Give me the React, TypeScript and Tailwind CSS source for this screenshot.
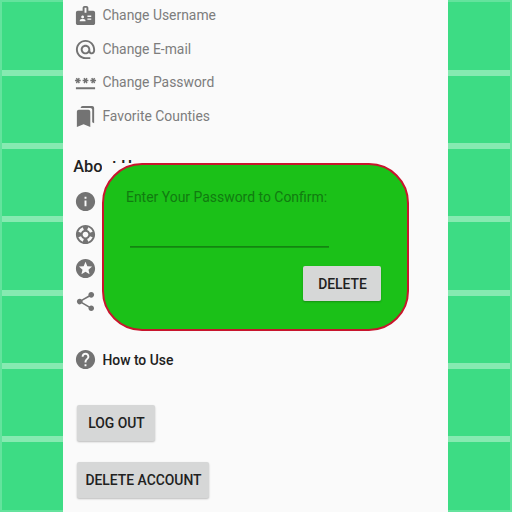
import type { ReactNode } from "react";
import {
  MdBadge,
  MdAlternateEmail,
  MdPassword,
  MdBookmarks,
  MdInfo,
  MdSupport,
  MdStars,
  MdShare,
  MdHelp,
} from "react-icons/md";

function Cells({ className }: { className: string }) {
  return (
    <div className={`grid h-full grid-rows-7 bg-[#3ddc84] ${className}`}>
      {[0, 1, 2, 3, 4, 5, 6].map((i) => (
        <div
          key={i}
          className="border-b-[3px] border-t-[3px] border-[#86eab1] first:border-t-2 first:border-t-[#64e39d] last:border-b-2 last:border-b-[#64e39d]"
        />
      ))}
    </div>
  );
}

function Row({ icon, children }: { icon: ReactNode; children?: ReactNode }) {
  return (
    <li className="flex h-[33.5px] items-center text-[13.9px] text-[#7d7d7d]">
      <span className="mr-[5.4px] text-[23px] text-[#737373]">{icon}</span>
      {children}
    </li>
  );
}

function Button({ className, children }: { className: string; children: ReactNode }) {
  return (
    <button
      className={`flex items-center justify-center whitespace-nowrap rounded-[2px] bg-[#d6d7d7] pl-px text-[13.9px] font-medium text-[#212121] shadow-[0_1px_2px_rgba(0,0,0,0.25)] ${className}`}
    >
      {children}
    </button>
  );
}

export default function App() {
  return (
    <div className="relative flex h-[512px] w-[512px] overflow-hidden font-['Roboto',sans-serif]">
      <Cells className="w-[63px] border-l-2 border-[#64e39d]" />
      <main className="flex h-full w-[385px] flex-col bg-[#fafafa] pl-[11px]">
        <ul className="-mt-[0.9px]">
          <Row icon={<MdBadge />}>Change Username</Row>
          <Row icon={<MdAlternateEmail />}>Change E-mail</Row>
          <Row icon={<MdPassword />}>Change Password</Row>
          <Row icon={<MdBookmarks />}>Favorite Counties</Row>
        </ul>
        <h2 className="-ml-[0.8px] mt-[21.9px] h-6 text-[16.4px] font-medium leading-6 text-[#212121]">
          About Us
        </h2>
        <ul className="mt-[5.3px]">
          <Row icon={<MdInfo />} />
          <Row icon={<MdSupport />} />
          <Row icon={<MdStars />} />
          <Row icon={<MdShare />} />
        </ul>
        <div className="mt-[29.7px] flex h-6 items-center text-[13.9px] font-medium text-[#212121]">
          <MdHelp className="mr-[5.4px] text-[23px] text-[#737373]" />
          How to Use
        </div>
        <Button className="ml-[3px] mt-[33px] h-[36px] w-[78px] pt-px">LOG OUT</Button>
        <Button className="ml-[3px] mt-[21px] h-[36px] w-[132px] pt-px">DELETE ACCOUNT</Button>
      </main>
      <Cells className="w-[64px] border-r-2 border-[#64e39d]" />

      <div className="absolute left-[102px] top-[163px] h-[168px] w-[307px] bg-[#fafafa]">
        <div className="flex h-full flex-col rounded-[40px] border-2 border-[#c8152d] bg-[#1bc118] pl-[22px] pr-[26px] pt-[22px]">
          <label className="h-5 text-[13.95px] leading-5 text-[#117b10]">
            Enter Your Password to Confirm:
          </label>
          <div className="ml-[4px] mt-[39px] h-[2px] w-[199px] border-b border-[#159513] bg-[#138511]" />
          <Button className="mt-[18px] h-[35px] w-[78px] self-end pt-[2px]">DELETE</Button>
        </div>
      </div>
    </div>
  );
}
